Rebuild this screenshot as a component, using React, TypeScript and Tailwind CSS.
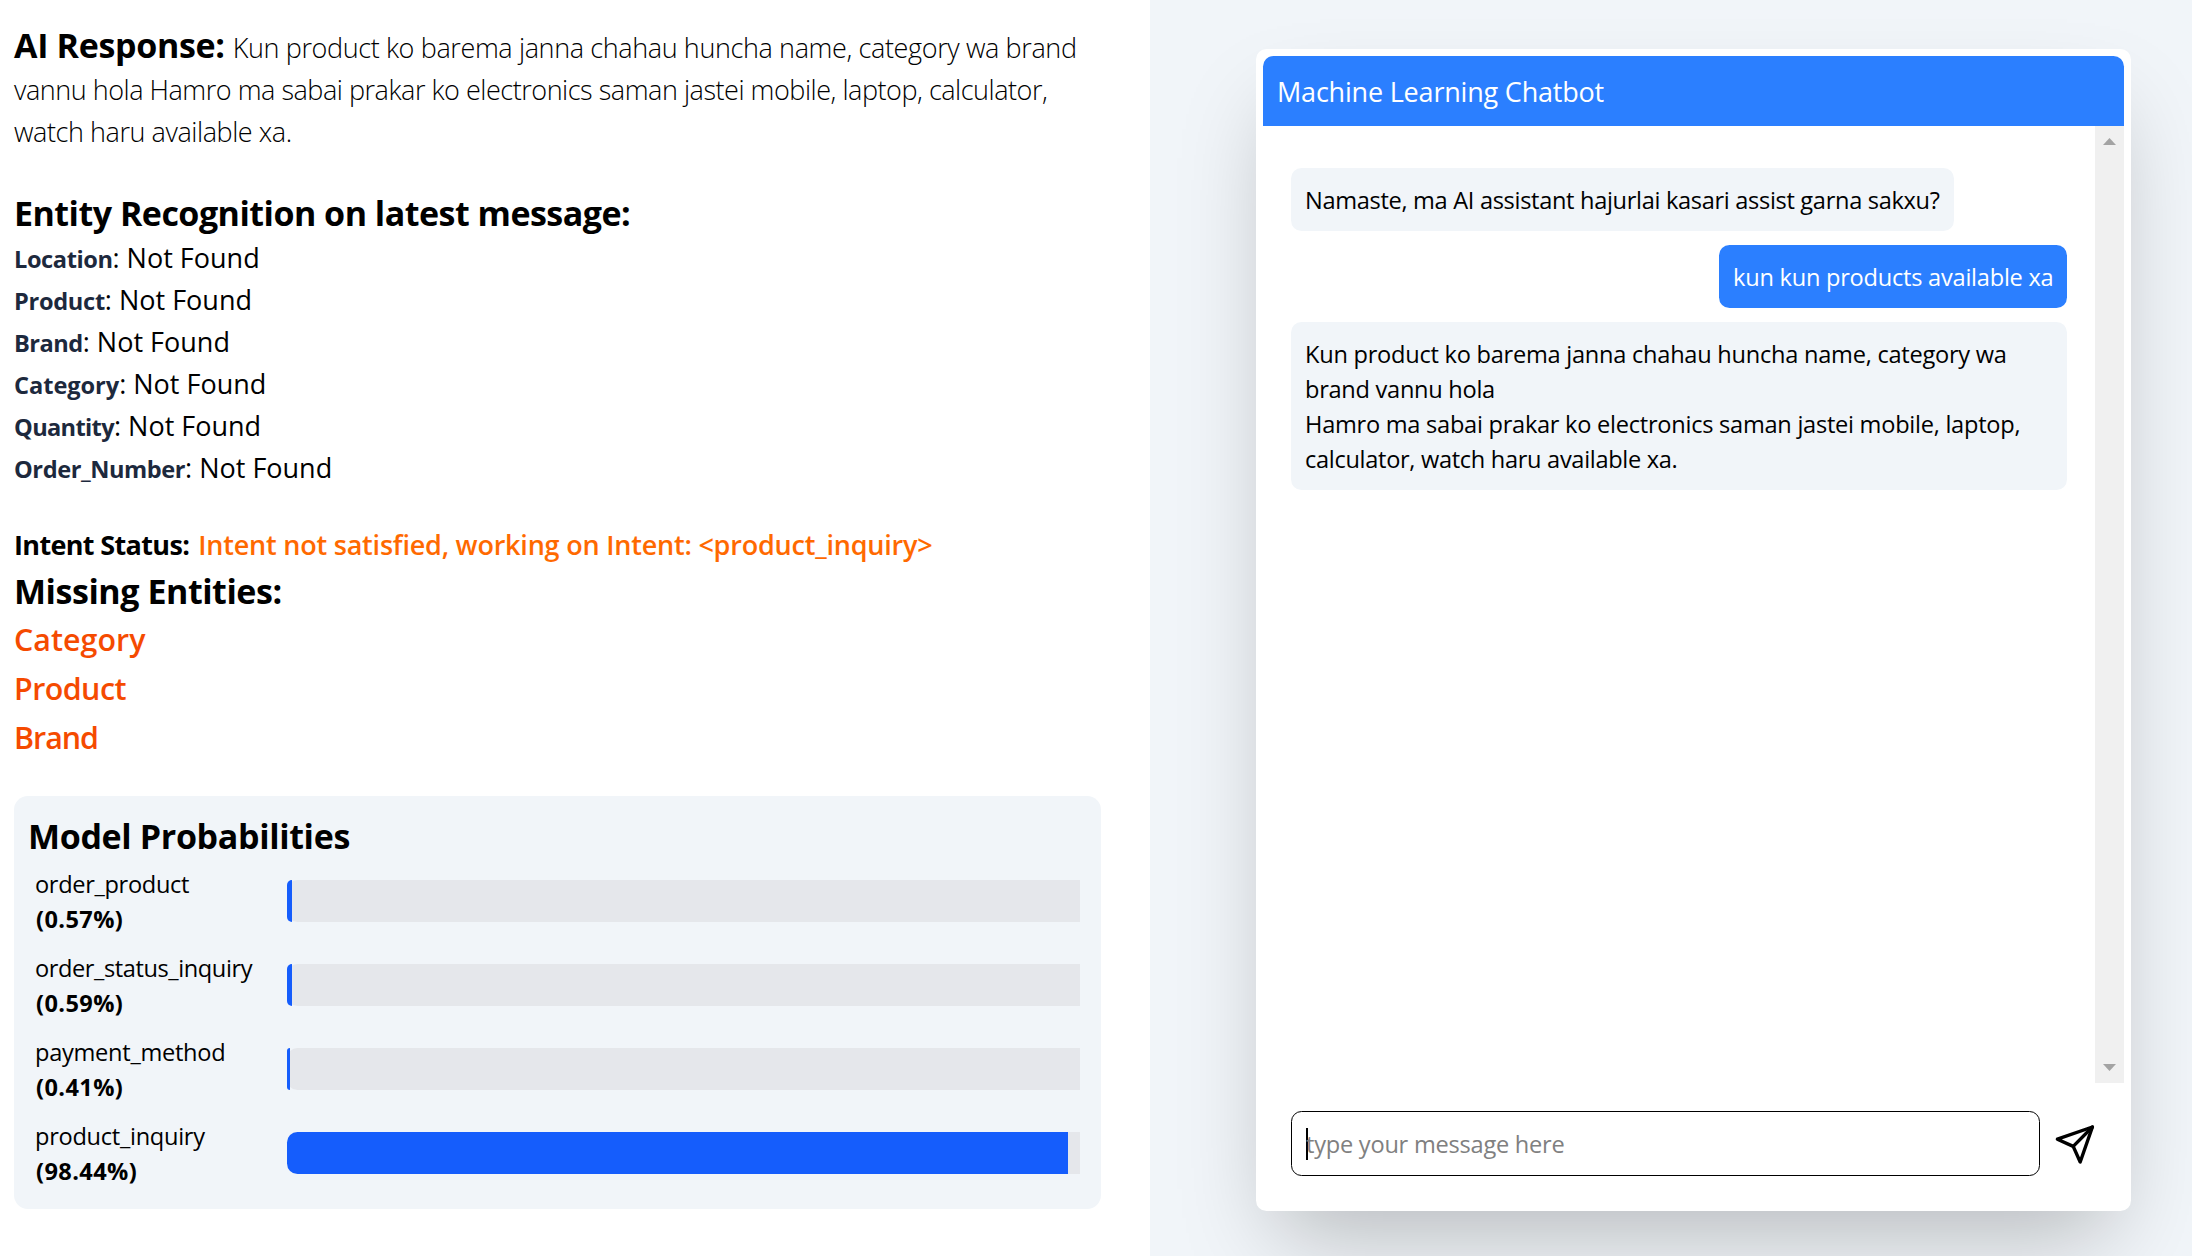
const entities = [
  { name: "Location", tracking: "tracking-[-0.42px]" },
  { name: "Product", tracking: "tracking-[-0.3px]" },
  { name: "Brand", tracking: "tracking-[-0.5px]" },
  { name: "Category", tracking: "tracking-[-0.05px]" },
  { name: "Quantity", tracking: "tracking-[-0.65px]" },
  { name: "Order_Number", tracking: "tracking-[-0.43px]" },
];

const missing = [
  { name: "Category", tracking: "tracking-[0.03px]" },
  { name: "Product", tracking: "tracking-[-0.54px]" },
  { name: "Brand", tracking: "tracking-[-1px]" },
];

const intents = [
  { name: "order_product", value: 0.57, tracking: "tracking-[-0.33px]" },
  { name: "order_status_inquiry", value: 0.59, tracking: "tracking-[-0.42px]" },
  { name: "payment_method", value: 0.41, tracking: "tracking-[-0.28px]" },
  { name: "product_inquiry", value: 98.44, tracking: "tracking-[-0.28px]" },
];

function Probabilities() {
  return (
    <section className="mt-[34px] h-[413px] w-[1087px] rounded-[14px] bg-slate-100 px-3.5 pt-4">
      <h2 className="h-[47px] text-[34px] leading-[49px] font-bold tracking-[-0.35px]">
        Model Probabilities
      </h2>
      {intents.map((intent) => (
        <div key={intent.name} className="flex items-center p-[7px]">
          <div className="h-[70px] w-[252px] shrink-0 pt-px text-[23.6px] leading-[35px]">
            <div className={intent.tracking}>{intent.name}</div>
            <div className="pl-px font-bold tracking-[0.4px]">({intent.value.toFixed(2)}%)</div>
          </div>
          <div className="h-[42px] flex-1 rounded-l-[10.5px] bg-gray-200">
            <div
              className="h-full rounded-l-[10.5px] bg-blue-600"
              style={{ width: `${intent.value}%` }}
            />
          </div>
        </div>
      ))}
    </section>
  );
}

function Analysis() {
  return (
    <main className="w-[1150px] shrink-0 bg-white px-3.5 pt-6 whitespace-nowrap">
      <div className="text-[27px] leading-[42px] font-light">
        <div className="flex h-[45px] items-baseline gap-2">
          <b className="text-[34px] font-bold tracking-[-0.33px]">AI Response:</b>
          <span className="tracking-[-0.38px]">
            Kun product ko barema janna chahau huncha name, category wa brand
          </span>
        </div>
        <div className="tracking-[-0.47px]">
          vannu hola Hamro ma sabai prakar ko electronics saman jastei mobile, laptop, calculator,
        </div>
        <div className="tracking-[-0.43px]">watch haru available xa.</div>
      </div>

      <h2 className="mt-9 h-12 text-[34px] leading-[49px] font-bold tracking-[-0.51px]">
        Entity Recognition on latest message:
      </h2>
      {entities.map((e) => (
        <div key={e.name} className="h-[42px] text-[27px] leading-[42px]">
          <b className={`text-[23.6px] font-bold text-slate-800 ${e.tracking}`}>{e.name}</b>: Not Found
        </div>
      ))}

      <div className="mt-[35px] flex h-[43px] gap-[9px] text-[27px] leading-[42px]">
        <b className="font-bold tracking-[-0.65px]">Intent Status:</b>
        <span className="font-semibold tracking-[-0.21px] text-orange-500">
          Intent not satisfied, working on Intent: &lt;product_inquiry&gt;
        </span>
      </div>
      <h2 className="h-12 text-[34px] leading-[49px] font-bold tracking-[-0.45px]">
        Missing Entities:
      </h2>
      {missing.map((m) => (
        <div
          key={m.name}
          className={`text-[30.4px] leading-[49px] font-semibold text-orange-600 ${m.tracking}`}
        >
          {m.name}
        </div>
      ))}

      <Probabilities />
    </main>
  );
}

function Scrollbar() {
  return (
    <div className="flex w-[29px] shrink-0 flex-col items-center justify-between bg-[#f0f0f0] py-3">
      <svg width="13" height="7" viewBox="0 0 13 7" fill="#a3a3a3">
        <path d="M6.5 0L13 7H0Z" />
      </svg>
      <svg width="13" height="7" viewBox="0 0 13 7" fill="#a3a3a3">
        <path d="M6.5 7L13 0H0Z" />
      </svg>
    </div>
  );
}

function SendIcon() {
  return (
    <svg
      className="shrink-0"
      width="42"
      height="42"
      viewBox="0 0 42 42"
      fill="none"
      stroke="black"
      strokeWidth="3.4"
      strokeLinecap="round"
      strokeLinejoin="round"
    >
      <path d="M3.4 16.2L38.4 4L26.2 39L19.2 23.4Z" />
      <path d="M19.2 23.4L38.4 4" />
    </svg>
  );
}

function Chat() {
  return (
    <div className="flex h-[1162px] w-[875px] flex-col rounded-[10.5px] bg-white p-[7px] shadow-[0_43.75px_87.5px_-21px_rgba(0,0,0,0.25)]">
      <header className="h-[70px] rounded-t-[10.5px] bg-blue-500 px-3.5 pt-px text-[27px] leading-[70px] tracking-[-0.2px] text-white">
        Machine Learning Chatbot
      </header>
      <div className="flex h-[957px]">
        <div className="flex flex-1 flex-col gap-3.5 px-7 pt-[42px] text-[23.6px] leading-[35px] whitespace-nowrap">
          <div className="w-[663px] rounded-[10.5px] bg-slate-100 px-3.5 pt-[15px] pb-[13px] tracking-[-0.32px]">
            Namaste, ma AI assistant hajurlai kasari assist garna sakxu?
          </div>
          <div className="w-[348px] self-end rounded-[10.5px] bg-blue-500 px-3.5 pt-[15px] pb-[13px] tracking-[-0.24px] text-white">
            kun kun products available xa
          </div>
          <div className="rounded-[10.5px] bg-slate-100 px-3.5 pt-[15px] pb-[13px]">
            <div className="tracking-[-0.25px]">
              Kun product ko barema janna chahau huncha name, category wa
            </div>
            <div className="tracking-[-0.28px]">brand vannu hola</div>
            <div className="tracking-[-0.26px]">
              Hamro ma sabai prakar ko electronics saman jastei mobile, laptop,
            </div>
            <div className="tracking-[-0.31px]">calculator, watch haru available xa.</div>
          </div>
        </div>
        <Scrollbar />
      </div>
      <div className="flex items-center gap-3.5 px-7 pt-7">
        <div className="flex h-[65px] w-[749px] items-center rounded-[10.5px] border border-black pl-3.5 text-[23.6px] leading-[35px] tracking-[-0.24px] text-[#808080]">
          <span className="-mr-0.5 h-8 w-0.5 bg-black" />
          <span className="pt-0.5">type your message here</span>
        </div>
        <SendIcon />
      </div>
    </div>
  );
}

export default function App() {
  return (
    <div className="flex h-[1256px] w-[2192px] overflow-hidden font-['Open_Sans',sans-serif] text-black">
      <Analysis />
      <aside className="flex flex-1 overflow-hidden bg-slate-100 pt-[49px] pl-[106px]">
        <Chat />
      </aside>
    </div>
  );
}
